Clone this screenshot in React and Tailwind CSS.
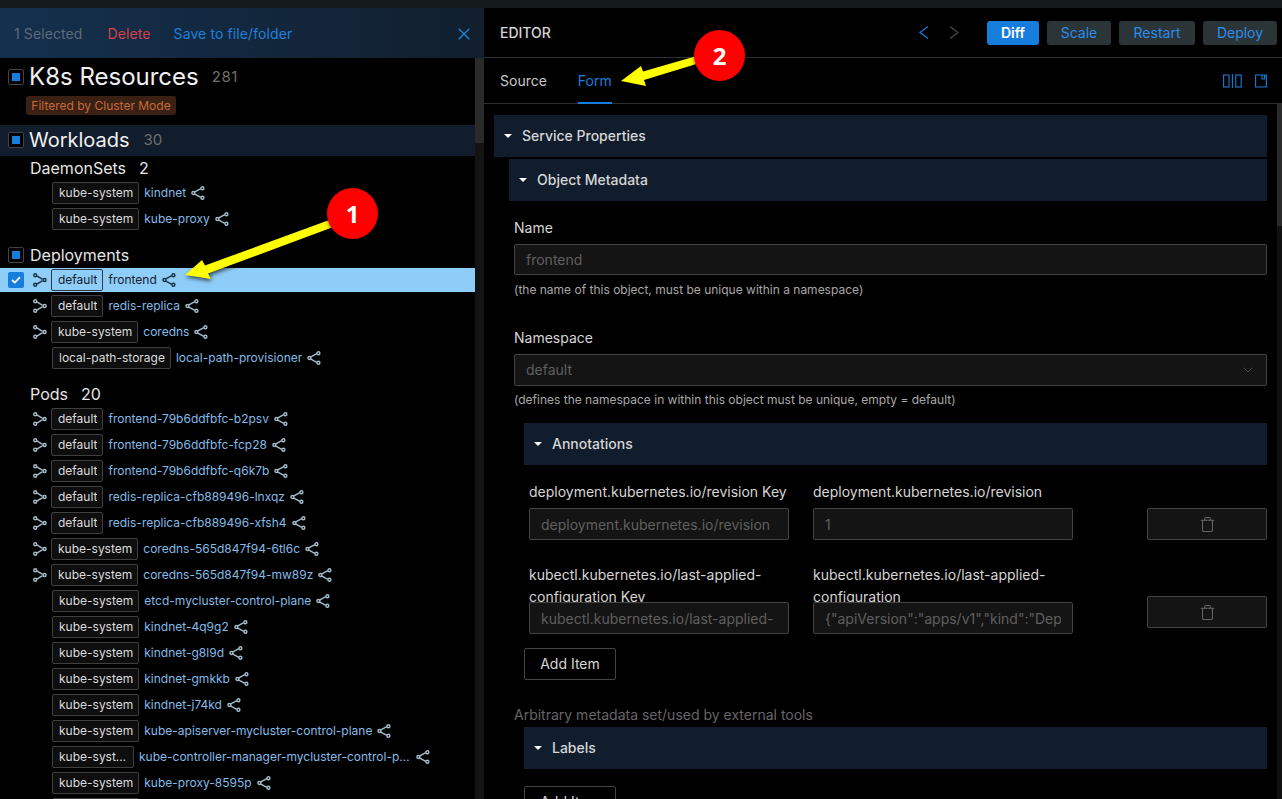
import React from 'react';
import { ChevronDown, Trash, X } from 'lucide-react';

const daemonSets = [
  { ns: 'kube-system', name: 'kindnet' },
  { ns: 'kube-system', name: 'kube-proxy' },
];

const deployments = [
  { ns: 'default', name: 'frontend', pods: true, selected: true },
  { ns: 'default', name: 'redis-replica', pods: true },
  { ns: 'kube-system', name: 'coredns', pods: true },
  { ns: 'local-path-storage', name: 'local-path-provisioner' },
];

const pods = [
  { ns: 'default', name: 'frontend-79b6ddfbfc-b2psv', pods: true },
  { ns: 'default', name: 'frontend-79b6ddfbfc-fcp28', pods: true },
  { ns: 'default', name: 'frontend-79b6ddfbfc-q6k7b', pods: true },
  { ns: 'default', name: 'redis-replica-cfb889496-lnxqz', pods: true },
  { ns: 'default', name: 'redis-replica-cfb889496-xfsh4', pods: true },
  { ns: 'kube-system', name: 'coredns-565d847f94-6tl6c', pods: true },
  { ns: 'kube-system', name: 'coredns-565d847f94-mw89z', pods: true },
  { ns: 'kube-system', name: 'etcd-mycluster-control-plane' },
  { ns: 'kube-system', name: 'kindnet-4q9g2' },
  { ns: 'kube-system', name: 'kindnet-g8l9d' },
  { ns: 'kube-system', name: 'kindnet-gmkkb' },
  { ns: 'kube-system', name: 'kindnet-j74kd' },
  { ns: 'kube-system', name: 'kube-apiserver-mycluster-control-plane' },
  { ns: 'kube-system', name: 'kube-controller-manager-mycluster-control-plane', long: true },
  { ns: 'kube-system', name: 'kube-proxy-8595p' },
  { ns: 'kube-system', name: 'kube-scheduler-mycluster-control-plane' },
];

// small node graph glyph, left node fans out to two right nodes
function ShareIcon({ dark }) {
  return (
    <svg width="14" height="14" viewBox="0 0 14 14" fill="none" stroke={dark ? '#1d3140' : '#a3bccb'} strokeWidth="1.4" className="shrink-0">
      <path d="M3.4 6.2 9.8 2.6M3.4 7.8l6.4 3.6" />
      <circle cx="2.4" cy="7" r="1.5" />
      <circle cx="11.4" cy="2.2" r="1.5" />
      <circle cx="11.4" cy="11.8" r="1.5" />
    </svg>
  );
}

// two left nodes merge into one right node
function PodsIcon({ dark }) {
  return (
    <svg width="14" height="14" viewBox="0 0 14 14" fill="none" stroke={dark ? '#1d3140' : '#a3bccb'} strokeWidth="1.4" className="shrink-0">
      <path d="M3.4 2.6 9.6 6.4M3.4 11.4 9.6 7.6" />
      <circle cx="2.2" cy="2.2" r="1.5" />
      <circle cx="2.2" cy="11.8" r="1.5" />
      <circle cx="11.6" cy="7" r="1.5" />
    </svg>
  );
}

function PartialCheck() {
  return (
    <span className="flex h-4 w-4 shrink-0 items-center justify-center rounded-[2px] border border-[#434343] bg-black">
      <span className="h-2 w-2 bg-[#177ddc]" />
    </span>
  );
}

function ResourceRow({ ns, name, pods: hasPods, selected, long }) {
  return (
    <div className={selected ? 'my-px flex h-6 items-center bg-[#8fcdf9] pl-2' : 'flex h-[26px] items-center pl-2'}>
      <span className="flex w-4 shrink-0 justify-center">
        {selected && (
          <span className="flex h-4 w-4 items-center justify-center rounded-[2px] bg-[#177ddc]">
            <svg width="10" height="8" viewBox="0 0 10 8" fill="none" stroke="#fff" strokeWidth="1.8">
              <path d="M1 4l2.8 2.6L9 1.2" />
            </svg>
          </span>
        )}
      </span>
      {hasPods ? (
        <span className="ml-[8px] mr-[3px] flex w-4 justify-center">
          <PodsIcon dark={selected} />
        </span>
      ) : (
        <span className="w-7 shrink-0" />
      )}
      <span
        className={`flex h-[22px] shrink-0 items-center rounded-[2px] border pl-[6px] pr-[5px] text-xs ${
          selected ? 'border-[#2d3a44] bg-transparent text-[#14202a]' : 'border-[#3f3f3f] bg-[#0e0e0e] text-[#dcdcdc]'
        } ${long ? 'w-[82px]' : ''}`}
      >
        <span className="truncate">{ns}</span>
      </span>
      <span className={`ml-[5px] truncate text-xs ${selected ? 'text-[#14202a]' : 'text-[#82bce8]'} ${long ? 'max-w-[272px]' : ''}`}>
        {name}
      </span>
      <span className="ml-[5px]">
        <ShareIcon dark={selected} />
      </span>
    </div>
  );
}

function Accordion({ title, indent }) {
  return (
    <div className={`flex h-[42px] items-center gap-[10px] bg-[#111d2c] pl-[10px] text-sm font-medium text-[#d6d6d6] ${indent}`}>
      <span className="h-0 w-0 border-x-[4px] border-t-[4px] border-x-transparent border-t-white" />
      {title}
    </div>
  );
}

function Field({ value, className }) {
  return (
    <input
      readOnly
      value={value}
      className={`relative block h-8 rounded-[2px] border border-[#434343] bg-[#141414] px-[11px] text-sm text-[#5f5f5f] outline-none ${className}`}
    />
  );
}

function TrashButton({ className }) {
  return (
    <div className={`ml-[50px] flex h-8 w-[120px] shrink-0 items-center justify-center self-end rounded-[2px] border border-[#434343] bg-[#141414] text-[#666] ${className}`}>
      <Trash size={17} strokeWidth={1.5} />
    </div>
  );
}

function AddItem() {
  return (
    <div className="flex h-8 w-[92px] items-center justify-center rounded-[2px] border border-[#434343] text-sm text-[#d6d6d6]">
      Add Item
    </div>
  );
}

function ActionButton({ label, width, primary }) {
  return (
    <button
      className={`flex h-6 items-center justify-center rounded-[3px] text-sm ${width} ${
        primary ? 'bg-[#177ddc] font-semibold text-white' : 'bg-[#2b3437] text-[#2a8eea]'
      }`}
    >
      {label}
    </button>
  );
}

function LeftPanel() {
  return (
    <div className="flex w-[484px] shrink-0 flex-col">
      <div className="flex h-[50px] shrink-0 items-center bg-linear-to-r from-[#14304e] to-[#111f2e] pl-[14px] pr-[10px] pt-px text-sm tracking-[0.1px]">
        <span className="text-[#5d6b78]">1 Selected</span>
        <span className="ml-[25px] text-[#d9404a]">Delete</span>
        <span className="ml-[23px] text-[#1f80dc]">Save to file/folder</span>
        <X size={20} strokeWidth={1.4} className="ml-auto text-[#1f86e2]" />
      </div>
      <div className="flex min-h-0 flex-1">
        <div className="min-w-0 flex-1 overflow-hidden">
          <div className="flex h-[38px] items-center gap-[5px] pl-2">
            <PartialCheck />
            <span className="text-2xl leading-none text-[#f0f0f0]">K8s Resources</span>
            <span className="ml-[8px] text-[15px] tracking-[0.5px] text-[#6f6f6f]">281</span>
          </div>
          <div className="ml-[26px] flex h-[19px] w-[150px] items-center justify-center rounded-[3px] bg-[#3a2114] text-xs text-[#c8693a]">
            Filtered by Cluster Mode
          </div>
          <div className="mt-[10px] flex h-[31px] items-center gap-[5px] bg-[#111d2c] pb-px pl-2">
            <PartialCheck />
            <span className="text-xl leading-none text-[#f0f0f0]">Workloads</span>
            <span className="ml-[9px] text-[15px] text-[#6f6f6f]">30</span>
          </div>
          <div className="flex h-[24px] items-center pl-[30px] text-base text-[#e6e6e6]">
            DaemonSets<span className="ml-[13px]">2</span>
          </div>
          {daemonSets.map((row) => (
            <ResourceRow key={row.name} {...row} />
          ))}
          <div className="mt-[10px] flex h-[25px] items-center gap-[6px] pl-2 text-base text-[#e6e6e6]">
            <PartialCheck />
            Deployments
          </div>
          {deployments.map((row) => (
            <ResourceRow key={row.name} {...row} />
          ))}
          <div className="mt-[10px] flex h-[25px] items-center pl-[30px] text-base text-[#e6e6e6]">
            Pods<span className="ml-[13px]">20</span>
          </div>
          {pods.map((row) => (
            <ResourceRow key={row.name} {...row} />
          ))}
        </div>
        <div className="w-[9px] shrink-0 bg-[#131313]">
          <div className="h-[85px] bg-[#2a2a2a]" />
        </div>
      </div>
    </div>
  );
}

function EditorForm() {
  return (
    <div className="min-w-0 flex-1 overflow-hidden pl-[10px] pr-[10px] pt-[11px]">
      <Accordion title="Service Properties" />
      <div className="mt-[2px]">
        <Accordion title="Object Metadata" indent="ml-[15px]" />
      </div>
      <div className="ml-5 mt-4">
        <div className="h-[22px] text-sm leading-[22px] text-[#d6d6d6]">Name</div>
        <Field value="frontend" className="mt-[5px] h-[31px] w-full" />
        <div className="mt-[6px] h-[18px] text-xs leading-[18px] text-[#a8a8a8]">
          (the name of this object, must be unique within a namespace)
        </div>
        <div className="mt-[28px] h-[22px] text-sm leading-[22px] text-[#d6d6d6]">Namespace</div>
        <div className="mt-[5px] flex h-8 items-center justify-between rounded-[2px] border border-[#434343] bg-[#141414] pl-[11px] pr-[10px] text-sm text-[#5f5f5f]">
          default
          <ChevronDown size={16} strokeWidth={1.2} className="text-[#5f5f5f]" />
        </div>
        <div className="mt-[5px] h-[18px] text-xs leading-[18px] text-[#a8a8a8]">
          (defines the namespace in within this object must be unique, empty = default)
        </div>
      </div>
      <div className="ml-[30px] mt-[14px]">
        <Accordion title="Annotations" />
        <div className="mt-4 flex gap-6 pl-[5px]">
          <div className="w-[260px] shrink-0">
            <div className="h-[27px] text-sm leading-[22px] text-[#d6d6d6]">deployment.kubernetes.io/revision Key</div>
            <Field value="deployment.kubernetes.io/revision" className="w-full" />
          </div>
          <div className="w-[260px] shrink-0">
            <div className="h-[27px] text-sm leading-[22px] text-[#d6d6d6]">deployment.kubernetes.io/revision</div>
            <Field value="1" className="w-full" />
          </div>
          <TrashButton />
        </div>
        <div className="mt-6 flex gap-6 pl-[5px]">
          <div className="w-[260px] shrink-0">
            <div className="h-[38px] text-sm leading-[22px] text-[#d6d6d6]">kubectl.kubernetes.io/last-applied-configuration Key</div>
            <Field value="kubectl.kubernetes.io/last-applied-" className="w-full" />
          </div>
          <div className="w-[260px] shrink-0">
            <div className="h-[38px] text-sm leading-[22px] text-[#d6d6d6]">kubectl.kubernetes.io/last-applied-configuration</div>
            <Field value={'{"apiVersion":"apps/v1","kind":"Deployment"}'} className="w-full" />
          </div>
          <TrashButton className="mb-[6px]" />
        </div>
        <div className="mt-[14px]">
          <AddItem />
        </div>
      </div>
      <div className="ml-5 mt-[26px] h-[18px] text-sm leading-[18px] text-[#666]">
        Arbitrary metadata set/used by external tools
      </div>
      <div className="ml-[30px] mt-[3px]">
        <Accordion title="Labels" />
        <div className="mt-[17px]">
          <AddItem />
        </div>
      </div>
    </div>
  );
}

function EditorPanel() {
  return (
    <div className="flex min-w-0 flex-1 flex-col">
      <div className="flex h-[50px] shrink-0 items-center border-b border-[#303030] pl-4 pr-[5px]">
        <span className="text-sm font-medium text-[#d6d6d6]">EDITOR</span>
        <svg width="10" height="13" viewBox="0 0 10 13" fill="none" stroke="#177ddc" strokeWidth="1.2" className="ml-auto">
          <path d="M9 .5 1 6.500l8 6" />
        </svg>
        <svg width="10" height="13" viewBox="0 0 10 13" fill="none" stroke="#4a4a4a" strokeWidth="1.2" className="ml-5">
          <path d="M1 .5l8 6-8 6" />
        </svg>
        <div className="ml-[28px] flex gap-2">
          <ActionButton label="Diff" width="w-[52px]" primary />
          <ActionButton label="Scale" width="w-16" />
          <ActionButton label="Restart" width="w-[76px]" />
          <ActionButton label="Deploy" width="w-[74px]" />
        </div>
      </div>
      <div className="flex h-[46px] shrink-0 items-stretch border-b border-[#303030] pl-4 pr-[15px] text-sm">
        <span className="flex items-center text-[#c9c9c9]">Source</span>
        <span className="relative ml-[31px] flex items-center text-[#177ddc]">
          Form
          <span className="absolute inset-x-0 -bottom-px h-[2px] bg-[#177ddc]" />
        </span>
        <svg width="19" height="14" viewBox="0 0 19 14" fill="none" stroke="#177ddc" strokeWidth="1.1" className="ml-auto self-center">
          <rect x="0.6" y="1" width="5.4" height="12" />
          <rect x="12.8" y="1" width="5.4" height="12" />
          <path d="M9.4 0v14" />
        </svg>
        <svg width="12" height="14" viewBox="0 0 12 14" fill="none" stroke="#177ddc" strokeWidth="1.1" className="ml-[13px] self-center">
          <path d="M.6 1h10.800v12H.6zM7 1v4h2.600V1" />
        </svg>
      </div>
      <div className="flex min-h-0 flex-1">
        <EditorForm />
        <div className="w-[5px] shrink-0 bg-[#111]">
          <div className="h-[122px] bg-[#2a2a2a]" />
        </div>
      </div>
    </div>
  );
}

// yellow callouts sitting over the screenshot
function Callouts() {
  return (
    <>
      <svg width="1282" height="799" className="pointer-events-none absolute left-0 top-0 z-20 drop-shadow-[1px_2px_2px_rgba(0,0,0,0.7)]">
        <path d="M185 275 202 260 205 265.500 332 219 336 226 208 273.500 211 279Z" fill="#ffff00" />
        <path d="M621 81 641 66 643 71.500 700 55 703 62 644 80 646 86Z" fill="#ffff00" />
      </svg>
      <div className="absolute left-[327px] top-[188px] z-30 flex h-[51px] w-[51px] items-center justify-center rounded-full bg-[#ff0000] font-['Open_Sans',sans-serif] text-[24px] font-bold text-white shadow-[1px_2px_5px_rgba(0,0,0,0.7)]">
        1
      </div>
      <div className="absolute left-[694px] top-[30px] z-30 flex h-[51px] w-[51px] items-center justify-center rounded-full bg-[#ff0000] font-['Open_Sans',sans-serif] text-[24px] font-bold text-white shadow-[1px_2px_5px_rgba(0,0,0,0.7)]">
        2
      </div>
    </>
  );
}

export default function App() {
  return (
    <div className="relative flex h-[799px] w-[1282px] flex-col overflow-hidden bg-black font-['Inter',sans-serif]">
      <div className="h-2 shrink-0 bg-[#141a1b]" />
      <div className="flex min-h-0 flex-1">
        <LeftPanel />
        <EditorPanel />
      </div>
      <Callouts />
    </div>
  );
}
